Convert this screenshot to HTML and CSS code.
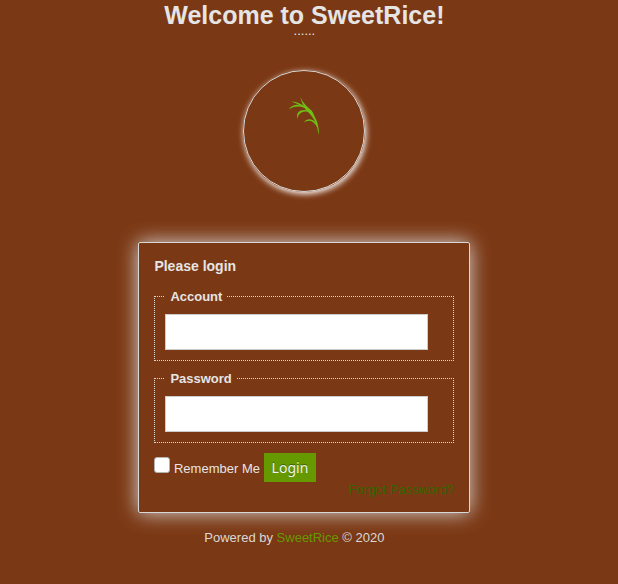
FILE: index.html
```html
<!DOCTYPE html>
<html lang="en">
<head>
<meta charset="utf-8">
<title>SweetRice</title>
<link rel="stylesheet" href="styles.css">
</head>
<body>
<main class="page">
  <h1 class="title">Welcome to SweetRice!</h1>
  <div class="dots">......</div>
  <div class="logo">
    <svg class="sprig" viewBox="0 0 50 50" width="50" height="50" fill="#70bf16" aria-hidden="true">
      <path d="M38.700 45 Q37.500 36 34 29.500 Q31 24.500 25.500 19.500 Q21.500 13 20.300 7 Q22.500 12 26.500 16 Q31 19.500 33 23.500 Q37.500 31 38.300 37 Q39.200 41 38.700 45Z"/>
      <path d="M9 19.600 Q11 15.200 17 14.800 Q22.500 14.500 28 18 L31 22 Q25 17.500 20 16.600 Q13 16 9 19.600Z"/>
      <path d="M11 11.500 Q16 11.500 19 13.200 Q23 14.500 25 18 Q20 14.500 11 11.500Z"/>
      <path d="M17.600 29.600 Q15.500 22.500 21 20.600 Q26 18.500 32 22.500 Q25 20.700 21.500 22.500 Q17.500 24.500 17.600 29.600Z"/>
      <path d="M24 32.500 Q26 29 30 29.200 Q36 30 37.500 38 Q34 31 29.500 30.800 Q26 30.700 24 32.500Z"/>
      <path d="M30 20.500 L31.500 20.200 L34 25 L31 23Z"/>
    </svg>
  </div>
  <form class="login">
    <h2 class="heading">Please login</h2>
    <fieldset class="field">
      <legend>Account</legend>
      <input class="text" type="text" aria-label="Account">
    </fieldset>
    <fieldset class="field">
      <legend>Password</legend>
      <input class="text" type="password" aria-label="Password">
    </fieldset>
    <div class="actions">
      <input class="check" type="checkbox" id="remember">
      <label class="remember" for="remember">Remember Me</label>
      <button class="submit" type="button">Login</button>
    </div>
    <div class="forgot"><a href="#">Forgot Password?</a></div>
  </form>
  <footer class="footer">Powered by <a href="#">SweetRice</a> © 2020</footer>
</main>
</body>
</html>
```
FILE: styles.css
```css
* { box-sizing: border-box; }
html { overflow: hidden; }
body {
  margin: 0;
  background: #7b3814;
  color: #e5e5e5;
  font: 13px/15px "Liberation Sans", Arial, sans-serif;
}
a { text-decoration: none; }
.page {
  display: flex;
  flex-direction: column;
  align-items: center;
  width: 608.8px;
  height: 584px;
}
.title { margin: 0; padding-top: 1px; font-size: 25px; line-height: 29px; }
.dots { height: 12px; line-height: 12px; margin-top: -5px; }
.logo {
  width: 122px;
  height: 122px;
  margin-top: 33px;
  border: 1px solid #d8d8d8;
  border-radius: 50%;
  box-shadow: 1px 2px 6px #fff;
}
.sprig { display: block; margin: 19px 0 0 36px; }
.login {
  width: 332px;
  height: 271px;
  margin-top: 50px;
  padding: 15px;
  border: 1px solid #d8d8d8;
  border-radius: 2px;
  box-shadow: 0 0 20px #d8d8d8;
}
.heading { margin: 0; font-size: 14px; line-height: 17px; }
.field {
  width: 300px;
  height: 72px;
  margin: 14px 0 0;
  padding: 10px;
  border: 1px dotted #d8d8d8;
}
.field + .field { margin-top: 10px; }
.field legend { padding: 0 5px; font-weight: bold; line-height: 15px; }
.text {
  display: block;
  width: 263px;
  height: 36px;
  margin: 0;
  padding: 8px;
  border: 1px solid #ccc;
  background: #fff;
}
.actions { display: flex; align-items: flex-start; height: 29px; margin-top: 10px; }
.check {
  appearance: none;
  width: 16px;
  height: 16px;
  margin: 4px 3.6px 0 0;
  border: 1px solid #b3b3b3;
  border-radius: 3px;
  background: #fff;
}
.remember { margin: 8px 4px 0 0; }
.submit {
  width: 52px;
  height: 29px;
  padding: 0;
  border: 0;
  background: #690;
  color: #f2f2f2;
  font: 14px/29px "Noto Sans", sans-serif;
  text-shadow: 0 -1px 0 #360;
}
.forgot { text-align: right; }
.forgot a { color: #360; }
.footer { margin: 17px 20px 0 0; color: #d8d8d8; }
.footer a { color: #690; }
```
